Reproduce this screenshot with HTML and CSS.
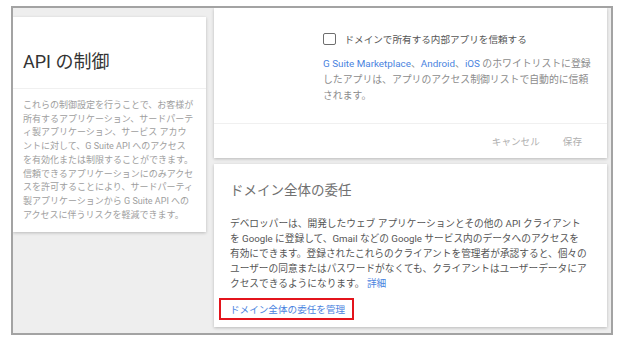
FILE: index.html
```html
<!DOCTYPE html>
<html lang="ja">
<head>
<meta charset="utf-8">
<link rel="stylesheet" href="styles.css">
</head>
<body>
<div class="frame">
  <div class="left-col">
    <div class="card info-card">
      <div class="info-head"><h1 class="info-title">API の制御</h1></div>
      <p class="info-body">これらの制御設定を行うことで、お客様が<br>所有するアプリケーション、サードパーテ<br>ィ製アプリケーション、サービス アカウ<br>ントに対して、G Suite API へのアクセス<br>を有効化または制限することができます。<br>信頼できるアプリケーションにのみアクセ<br>スを許可することにより、サードパーティ<br>製アプリケーションから G Suite API への<br>アクセスに伴うリスクを軽減できます。</p>
    </div>
  </div>
  <div class="right-col">
    <div class="card settings-card">
      <div class="settings-main">
        <div class="check-row">
          <span class="checkbox"></span>
          <span class="check-label">ドメインで所有する内部アプリを信頼する</span>
        </div>
        <p class="check-desc"><span class="link">G Suite Marketplace</span>、<span class="link">Android</span>、<span class="link">iOS</span> のホワイトリストに登録<br>したアプリは、アプリのアクセス制御リストで自動的に信頼<br>されます。</p>
      </div>
      <div class="settings-foot">
        <span class="btn">キャンセル</span>
        <span class="btn">保存</span>
      </div>
    </div>
    <div class="card deleg-card">
      <h2 class="deleg-title">ドメイン全体の委任</h2>
      <p class="deleg-body">デベロッパーは、開発したウェブ アプリケーションとその他の API クライアント<br>を Google に登録して、Gmail などの Google サービス内のデータへのアクセスを<br>有効にできます。登録されたこれらのクライアントを管理者が承認すると、個々の<br>ユーザーの同意またはパスワードがなくても、クライアントはユーザーデータにア<br>クセスできるようになります。 <span class="link">詳細</span></p>
      <div class="manage-box"><span class="link">ドメイン全体の委任を管理</span></div>
    </div>
  </div>
</div>
</body>
</html>
```

FILE: styles.css
```css
* { box-sizing: border-box; }
html, body { margin: 0; padding: 0; background: #ffffff; }
body {
  font-family: Roboto, "Noto Sans CJK JP", sans-serif;
  width: 624px;
  height: 354px;
  overflow: hidden;
}
.frame {
  margin: 6px 0 0 11px;
  width: 602px;
  height: 329px;
  border: 2px solid #a3a3a3;
  background: #eeeeee;
  display: flex;
  gap: 8px;
  align-items: flex-start;
  overflow: hidden;
}
.card {
  background: #ffffff;
  box-shadow: 0 1px 3px rgba(0, 0, 0, 0.22);
}
.left-col {
  width: 193px;
  padding-top: 9px;
  flex: none;
}
.info-head {
  padding: 33px 10px 14px;
  border-bottom: 1px solid #f0f0f0;
}
.info-title {
  margin: 0;
  font-size: 18px;
  line-height: 24px;
  font-weight: 400;
  color: #333333;
}
.info-body {
  margin: 0;
  padding: 10px 8px 10px 10px;
  font-size: 9px;
  line-height: 13.7px;
  color: #9e9e9e;
  white-space: nowrap;
}
.right-col {
  width: 393px;
  flex: none;
  display: flex;
  flex-direction: column;
  gap: 6px;
}
.settings-main {
  padding: 23px 16px 18px 109px;
  border-bottom: 1px solid #f0f0f0;
}
.check-row {
  display: flex;
  align-items: center;
  gap: 9px;
  height: 16px;
}
.checkbox {
  width: 12.5px;
  height: 12.5px;
  border: 1.5px solid #6e6e6e;
  border-radius: 2px;
  flex: none;
}
.check-label {
  font-size: 9.6px;
  color: #555555;
  white-space: nowrap;
}
.check-desc {
  margin: 9px 0 0;
  font-size: 9.85px;
  line-height: 16.2px;
  color: #8c8c8c;
  white-space: nowrap;
}
.link { color: #4a83e0; }
.settings-foot {
  height: 34px;
  display: flex;
  justify-content: flex-end;
  align-items: center;
  gap: 23px;
  padding-right: 25px;
}
.btn {
  font-size: 9.6px;
  color: #b0b0b0;
}
.deleg-card {
  padding: 16px 16px 7px;
}
.deleg-title {
  margin: 0;
  font-size: 13.5px;
  line-height: 20px;
  font-weight: 400;
  color: #707070;
}
.deleg-body {
  margin: 16px 0 0;
  font-size: 9.7px;
  line-height: 15px;
  color: #555555;
  white-space: nowrap;
}
.manage-box {
  margin: 7px 0 0 -11px;
  width: 135px;
  height: 22.5px;
  border: 2px solid #e3141c;
  padding: 0 0 0 9px;
  display: flex;
  align-items: center;
  font-size: 9.6px;
  white-space: nowrap;
}
```
